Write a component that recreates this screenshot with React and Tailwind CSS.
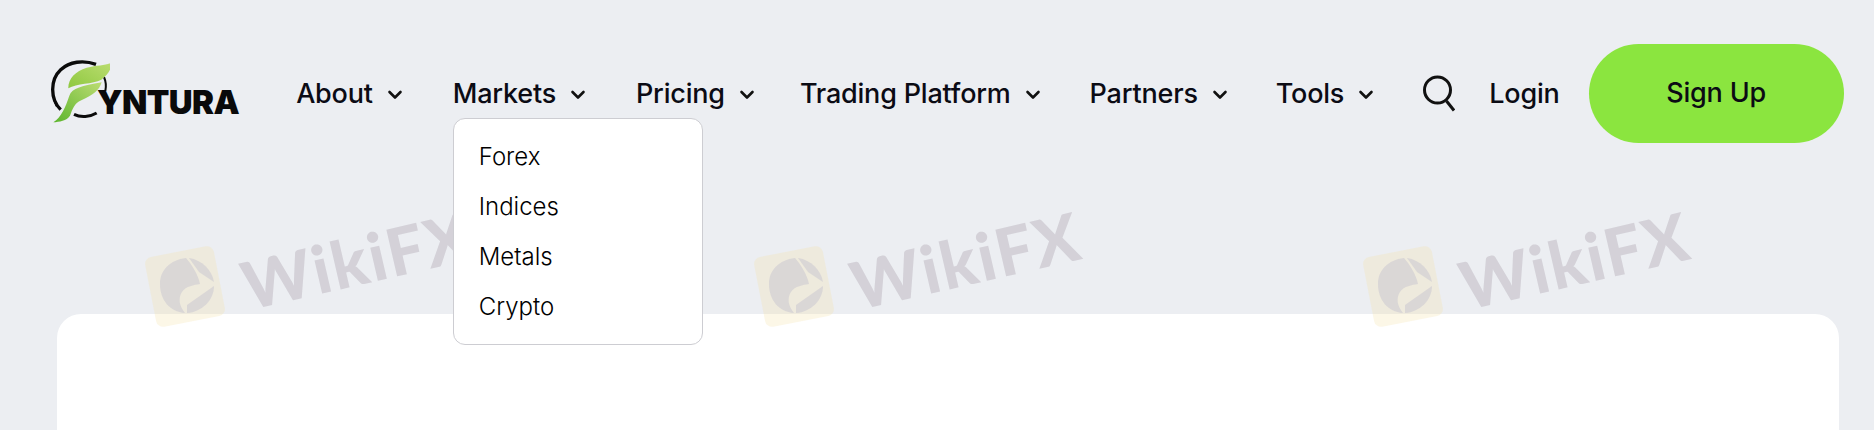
const nav = [
  { label: "About", cls: "ml-[57px]" },
  { label: "Markets", cls: "ml-[50px]" },
  { label: "Pricing", cls: "ml-[50px]" },
  { label: "Trading Platform", cls: "ml-[45px]" },
  { label: "Partners", cls: "ml-[49px]" },
  { label: "Tools", cls: "ml-[48px]" },
];

function Chevron() {
  return (
    <svg width="16" height="10" viewBox="0 0 16 10" fill="none" className="ml-[14px] mt-[2px]">
      <path d="M2.5 2l5.5 5.5L13.5 2" stroke="#111" strokeWidth="2.6" strokeLinecap="round" strokeLinejoin="round" />
    </svg>
  );
}

function Logo() {
  return (
    <div className="flex items-center">
      <svg width="70" height="90" viewBox="0 0 210 270" className="shrink-0 mt-[1px]">
        <defs>
          <linearGradient id="lf1" x1="0" y1="1" x2="1" y2="0">
            <stop offset="0" stopColor="#8ec83f" />
            <stop offset="1" stopColor="#bcdd72" />
          </linearGradient>
          <linearGradient id="lf2" x1="0" y1="1" x2="1" y2="0">
            <stop offset="0" stopColor="#5db52e" />
            <stop offset="1" stopColor="#bcdc72" />
          </linearGradient>
        </defs>
        <path d="M62 182C30 150 30 92 62 62C88 38 130 32 168 46" fill="none" stroke="#0b0b0b" strokeWidth="10" />
        <path d="M50 172C36 146 36 108 46 84" fill="none" stroke="#0b0b0b" strokeWidth="5" />
        <path d="M102 196C122 206 150 204 170 192" fill="none" stroke="#0b0b0b" strokeWidth="9" />
        <path d="M192 84C198 98 199 112 196 126" fill="none" stroke="#0b0b0b" strokeWidth="6" />
        <path d="M85 118C84 90 106 66 140 56C176 48 204 50 218 38C214 60 204 78 184 92C158 106 110 102 85 118Z" fill="url(#lf1)" />
        <path d="M40 220C64 204 76 176 88 140C96 118 126 110 185 100C178 124 160 138 124 154C102 164 98 180 90 200C80 216 58 218 40 220Z" fill="url(#lf2)" />
      </svg>
      <span className="ml-[-13px] mt-[18px] text-[33px] leading-none font-black text-[#0a0a0a] tracking-[-0.6px] font-['Inter',sans-serif]">
        YNTURA
      </span>
    </div>
  );
}

function Watermark({ cls }) {
  return (
    <div className={`absolute top-[240px] flex h-[100px] items-center ${cls}`}>
      <svg width="100" height="100" viewBox="0 0 100 100" className="shrink-0">
        <rect x="10" y="11" width="70" height="71" rx="7" fill="#f5e3a8" fillOpacity="0.28" transform="rotate(-11 45 46.5)" />
        <g fill="#cfcdd2" fillOpacity="0.65">
          <path d="M20 44C20 30 30 20 46 18C52 25 58 34 60 44C54 45 46 46 42 52C38 58 39 66 45 73C30 72 20 60 20 44Z" />
          <path d="M49 18C62 20 72 30 74 42L59 32Z" />
          <path d="M74 46C74 60 62 72 47 73L47 65Z" />
        </g>
      </svg>
      <span className="ml-[0px] mt-[-60px] rotate-[-13deg] text-[66px] leading-none font-black tracking-[2px] text-[#8b7d8a]/25 font-['Lato',sans-serif]">
        WikiFX
      </span>
    </div>
  );
}

export default function App() {
  return (
    <div className="relative h-[430px] w-[1874px] overflow-hidden bg-[#eceef2] font-['Inter',sans-serif] text-[#0b0b14]">
      <header className="flex h-[314px] items-start pl-[40px] pt-[44px]">
        <div className="flex h-[99px] items-center">
          <Logo />
          <nav className="flex items-center">
            {nav.map((n) => (
              <div key={n.label} className={`relative flex items-center ${n.cls}`}>
                <span className="text-[27px] leading-none font-medium tracking-[-0.2px] whitespace-nowrap">{n.label}</span>
                <Chevron />
                {n.label === "Markets" && (
                  <div className="absolute left-0 top-[38px] z-20 flex h-[227px] w-[250px] flex-col rounded-[12px] border border-[#cdcdd2] bg-white pl-[25px] pt-[13px]">
                    {["Forex", "Indices", "Metals", "Crypto"].map((i) => (
                      <div key={i} className="flex h-[50px] items-center text-[24px] font-[350] text-black">
                        {i}
                      </div>
                    ))}
                  </div>
                )}
              </div>
            ))}
          </nav>
          <svg width="32" height="37" viewBox="0 0 32 37" fill="none" className="ml-[49px] shrink-0">
            <circle cx="14.5" cy="15" r="13" stroke="#111" strokeWidth="3" />
            <path d="M23.5 26l7.5 9.5" stroke="#111" strokeWidth="3" />
          </svg>
          <span className="ml-[34px] text-[27px] leading-none font-medium tracking-[-0.2px]">Login</span>
          <button className="ml-[29px] flex h-[99px] w-[255px] items-center justify-center rounded-[50px] bg-[#8be53f] text-[27px] font-medium tracking-[-0.2px]">
            Sign Up
          </button>
        </div>
      </header>
      <main className="mx-[57px] h-[116px] w-[1782px] rounded-t-[24px] bg-white" />
      <Watermark cls="left-[140px]" />
      <Watermark cls="left-[749px]" />
      <Watermark cls="left-[1358px]" />
    </div>
  );
}
